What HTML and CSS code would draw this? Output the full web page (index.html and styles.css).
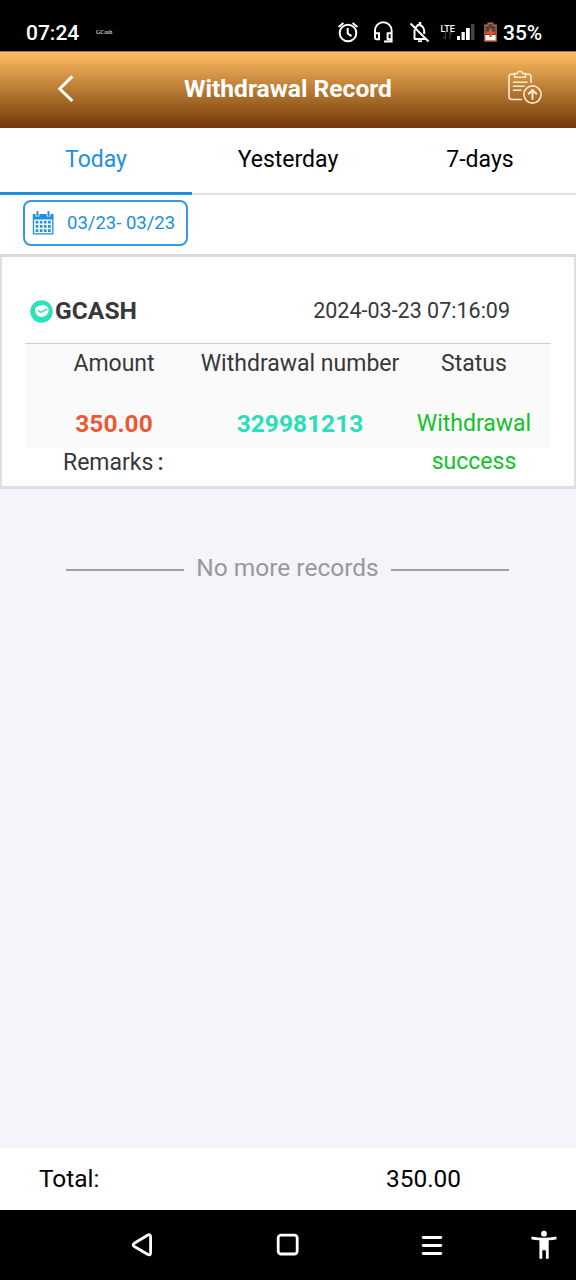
FILE: index.html
```html
<!DOCTYPE html>
<html lang="en">
<head>
<meta charset="utf-8">
<title>Withdrawal Record</title>
<link rel="stylesheet" href="styles.css">
</head>
<body>
<div class="screen">
  <div class="status-bar">
    <span class="clock">07:24</span>
    <span class="carrier">GCash</span>
    <svg class="status-icons" width="164" height="30" viewBox="336 18 164 30" fill="none" stroke="#fff" stroke-width="2">
      <circle cx="348" cy="33" r="8.3"/>
      <path d="M347.7 28v5.500l3.800 2.600M338.600 27l4.800-4M357.400 27l-4.800-4"/>
      <path d="M375 38v-7.500a8.300 8.300 0 0 1 16.600 0V41.500h-7.600M375 33.300h4v5.900h-2.500a1.500 1.500 0 0 1-1.500-1.500zM391.600 33.300h-4v5.900h4z"/>
      <path d="M410.500 23.500l18 18M414 39h12M414.500 39v-9.500M415.800 27.500a5.500 5.500 0 0 1 2.200-2M417 25.300a5.600 5.600 0 0 1 7.200 5.200v3.500"/>
      <path d="M420 22v3" stroke-width="2.500"/>
      <path d="M418 41.200h4" stroke-width="1.800"/>
      <path d="M445.500 39v-7m-2 5l2 2M450 32v7m0-7l2 2" stroke="#3b3b3b" stroke-width="1.300"/>
      <g stroke="none" fill="#fff">
        <path d="M457 36h3v4h-3zM461.500 32h3.300v8h-3.300zM466 28h3.800v12H466z"/>
        <path d="M471 24h3.500v16H471z" fill="#444"/>
        <path d="M487.500 22.500h6v2h3.300v17.300h-12.600V24.500h3.300z" fill="#c96a35"/>
        <path d="M488.500 24h4v2h3v9h-10v-9h3z" fill="#474544"/>
        <path d="M485.500 35h10v5.200h-10z"/>
        <path d="M489.300 28.500h2.400v3h3v2.400h-3v3h-2.400v-3h-3v-2.400h3z" fill="#f0502c"/>
      </g>
      <text class="network" x="440.500" y="32.200">LTE</text>
    </svg>
    <span class="battery">35%</span>
  </div>

  <header class="header">
    <svg class="back" width="20" height="30" viewBox="0 0 20 30" fill="none" stroke="#fff" stroke-width="3"><path d="M17.300 2.400L4.700 14.700 17.300 27"/></svg>
    <h1 class="title">Withdrawal Record</h1>
    <svg class="records" width="36" height="36" viewBox="0 0 36 36" fill="none" stroke="#ffe9cf" stroke-width="1.600" stroke-linecap="round" stroke-linejoin="round">
      <path d="M7.500 5H5a3 3 0 0 0-3 3v19.500a3 3 0 0 0 3 3h9.500M18.500 5H21a3 3 0 0 1 3 3v5.500"/>
      <path d="M7.500 8.300V4.500h2.700a2.800 2.800 0 0 1 5.500 0h2.800v3.800zM6.500 13.200H20M6.500 17.200H17M6.500 21.200H14"/>
      <circle cx="25.500" cy="25.500" r="8.600"/>
      <path d="M25.500 30v-8.800M21.700 24.700l3.800-3.800 3.800 3.800" stroke-width="2"/>
    </svg>
  </header>

  <nav class="tabs">
    <div class="tab active"><span>Today</span></div>
    <div class="tab"><span>Yesterday</span></div>
    <div class="tab"><span>7-days</span></div>
  </nav>

  <div class="filter">
    <div class="date-button">
      <svg width="22" height="24" viewBox="0 0 22 24">
        <path d="M.800 3h20.700v19.500a1 1 0 0 1-1 1H1.800a1 1 0 0 1-1-1z" fill="#2090dc"/>
        <path d="M2.100 8.500h18.100v13.700H2.100z" fill="#fff"/>
        <path d="M5.500 0v5.500M16.500 0v5.500" stroke="#fff" stroke-width="3.800"/>
        <path d="M5.500 1v3.500M16.500 1v3.500" stroke="#2090dc" stroke-width="2" stroke-linecap="round"/>
        <path d="M3.600 11.200h15.200M3.600 15.400h15.200M3.600 19.600h15.200" stroke="#2090dc" stroke-width="2.700" stroke-dasharray="2.700 1.450"/>
      </svg>
      <span class="dates">03/23- 03/23</span>
    </div>
  </div>

  <main class="content">
    <section class="card">
      <div class="card-head">
        <svg width="23" height="23" viewBox="0 0 23 23">
          <circle cx="11.500" cy="11.500" r="11.200" fill="#2be0bb"/>
          <path d="M5 8.500Q8 5 13 5.200q4 0 5.200 2.500c1.500 4-1 8-5 9-5 1-9-3-8.200-8.200z" fill="#fff"/>
          <path d="M8.200 10.500l2.600 1.800 6.500-3.500" fill="none" stroke="#2be0bb" stroke-width="1.500"/>
        </svg>
        <span class="method">GCASH</span>
        <span class="time">2024-03-23 07:16:09</span>
      </div>
      <div class="details">
        <div class="cell">Amount</div>
        <div class="cell number-label">Withdrawal number</div>
        <div class="cell">Status</div>
        <div class="cell value amount">350.00</div>
        <div class="cell value number">329981213</div>
        <div class="cell value state">Withdrawal<br>success</div>
      </div>
      <div class="remarks">Remarks<span class="colon">:</span></div>
    </section>
    <div class="end"><span class="end-text">No more records</span></div>
  </main>

  <footer class="total">
    <span class="total-label">Total:</span>
    <span class="total-value">350.00</span>
  </footer>

  <div class="nav-bar">
    <svg width="576" height="70" viewBox="0 1210 576 70" fill="none" stroke="#fff" stroke-width="2.800" stroke-linejoin="round" stroke-linecap="round">
      <path d="M134.300 1243.300L147.500 1235.200Q150.600 1233.700 150.600 1237v15.500Q150.600 1256 147.500 1254.200L134.300 1246.500Q132 1245 134.300 1243.300z"/>
      <rect x="278.200" y="1235.200" width="19" height="18.800" rx="2.800"/>
      <path d="M423.200 1237.500h17.600M423.200 1245.500h17.600M423.200 1253.500h17.600"/>
      <g fill="#fff" stroke="none">
        <circle cx="544" cy="1233.700" r="2.900"/>
        <path d="M531.700 1236.600q12.300 2.400 24.500 0l.5 2.600q-3.700.8-8 1.100v18.400h-2.800v-8.400h-3.600v8.400h-2.900v-18.400q-4.300-.3-8.200-1.100z"/>
      </g>
    </svg>
  </div>
</div>
</body>
</html>
```
FILE: styles.css
```css
* { box-sizing: border-box; }
body { margin: 0; font-family: Roboto, "Liberation Sans", sans-serif; color: #000; }
.screen { width: 576px; height: 1280px; display: flex; flex-direction: column; overflow: hidden; background: #f4f4fa; white-space: nowrap; }
svg { flex: none; display: block; }

.status-bar { height: 51px; flex: none; background: #000; color: #fff; display: flex; align-items: center; padding: 15px 0 0 26px; }
.clock { width: 70px; font-size: 21px; font-weight: 500; line-height: 36px; }
.carrier { width: 240px; font: 6px "Liberation Serif", serif; margin-top: -2px; }
.network { font: 500 9px Roboto, sans-serif; fill: #fff; stroke: none; }
.battery { margin-left: 3px; font-size: 21px; font-weight: 500; line-height: 36px; }

.header { height: 77px; flex: none; display: flex; align-items: center; padding: 0 33px 2px 55px; background: linear-gradient(#ffbd62, #713806); border-top: 1px solid #a57b48; }
.title { margin: 0 0 0 109px; color: #fff; font-size: 24.6px; font-weight: 700; line-height: 36px; }
.records { margin: -4px 0 0 auto; }

.tabs { height: 67px; flex: none; display: grid; grid-template-columns: repeat(3, 1fr); background: #fff; }
.tab { display: flex; justify-content: center; font-size: 23px; line-height: 64px; border-bottom: 2px solid #e0e0e0; }
.active { color: #2090dc; border-bottom: 3px solid #2090dc; }

.filter { height: 59px; flex: none; padding: 5px 0 0 23px; background: #fff; }
.date-button { width: 165px; height: 46px; display: flex; align-items: center; gap: 13px; padding-left: 7px; color: #2090dc; border: 2px solid #3399df; border-radius: 8px; }
.dates { font-size: 18.5px; padding-bottom: 1px; }

.content { flex: 1; }
.card { height: 235px; padding: 4px 23px 0; background: #fff; border: 2px solid #e0e0e0; border-top: 3px solid #d9d9d9; border-bottom: 3px solid #dfdfe2; color: #38383a; font-size: 23px; }
.card-head { height: 83px; display: flex; align-items: center; padding: 19px 41px 0 5px; border-bottom: 1px solid #cfcfcf; }
.method { margin: -2px 0 0 2px; font-size: 24.6px; font-weight: 700; }
.time { margin: -2px 0 0 auto; font-size: 21.5px; }
.details { height: 104px; display: grid; grid-template-columns: 178px 194px 154px; grid-template-rows: 40px 64px; background: #fafafa; }
.cell { display: flex; justify-content: center; padding-top: 1px; line-height: 38px; }
.value { padding-top: 21px; font-size: 24.5px; font-weight: 700; }
.amount { color: #e95b35; }
.number { color: #2bddb9; }
.state { color: #13c12c; font-size: 23px; font-weight: 400; text-align: center; }
.remarks { padding-left: 38px; line-height: 29px; }
.colon { margin-left: 4px; font-weight: 500; }

.end { display: flex; align-items: center; gap: 12px; padding: 63px 67px 0 66px; color: #999; font-size: 24.5px; line-height: 32px; }
.end::before, .end::after { content: ""; flex: 1; height: 2px; background: #a0a0a2; margin-top: 3px; }

.total { height: 62px; flex: none; display: flex; align-items: center; padding: 0 115px 2px 39px; justify-content: space-between; background: #fff; font-size: 24.4px; }
.nav-bar { height: 70px; flex: none; background: #000; }
```
